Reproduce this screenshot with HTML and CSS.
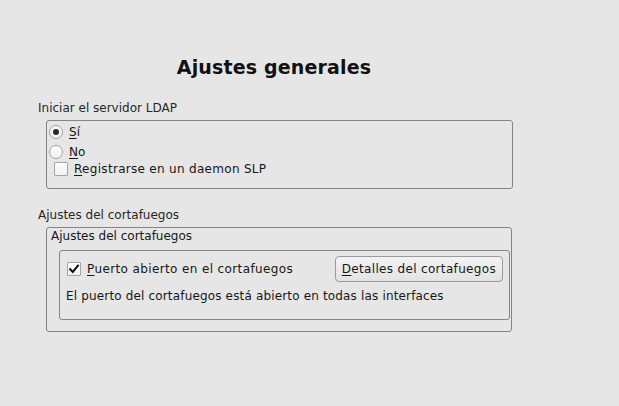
FILE: index.html
```html
<!DOCTYPE html>
<html lang="es">
<head>
<meta charset="utf-8">
<title>Ajustes generales</title>
<link rel="stylesheet" href="styles.css">
</head>
<body>
<div class="page">
  <h1 class="title">Ajustes generales</h1>

  <div class="section-label">Iniciar el servidor LDAP</div>
  <div class="group ldap">
    <div class="row radio-row">
      <span class="radio checked"></span>
      <span class="text"><u>S</u>í</span>
    </div>
    <div class="row radio-row">
      <span class="radio"></span>
      <span class="text"><u>N</u>o</span>
    </div>
    <div class="row check-row slp">
      <span class="check"></span>
      <span class="text wide"><u>R</u>egistrarse en un daemon SLP</span>
    </div>
  </div>

  <div class="section-label second">Ajustes del cortafuegos</div>
  <div class="group fw">
    <div class="legend">Ajustes del cortafuegos</div>
    <div class="inner">
      <div class="fw-row">
        <div class="row check-row">
          <span class="check checked">
            <svg viewBox="0 0 14 14" width="14" height="14"><path d="M2.5 7.2 L5.6 10.4 L11.6 3.2" fill="none" stroke="#111" stroke-width="2.4" stroke-linecap="square"/></svg>
          </span>
          <span class="text wider"><u>P</u>uerto abierto en el cortafuegos</span>
        </div>
        <button class="btn"><u>D</u>etalles del cortafuegos</button>
      </div>
      <div class="status">El puerto del cortafuegos está abierto en todas las interfaces</div>
    </div>
  </div>
</div>
</body>
</html>
```

FILE: styles.css
```css
html, body {
  margin: 0;
  padding: 0;
  background: #e6e6e6;
}

body {
  font-family: "DejaVu Sans", "Liberation Sans", sans-serif;
  font-size: 12px;
  line-height: 14px;
  color: #161616;
  width: 619px;
  height: 406px;
  overflow: hidden;
}

.page {
  padding: 56px 0 0 38px;
  width: 472px;
}

.title {
  margin: 0;
  font-size: 19px;
  line-height: 22px;
  font-weight: bold;
  text-align: center;
  color: #111;
  letter-spacing: 0.15px;
}

.section-label {
  margin-top: 23px;
  height: 14px;
  color: #262626;
}

.section-label.second {
  margin-top: 19px;
}

.group {
  margin-left: 8px;
  width: 463px;
  border: 1px solid #858585;
  border-radius: 3px;
}

.ldap {
  margin-top: 5px;
  padding: 1px 0 12px 2px;
}

.row {
  display: flex;
  align-items: center;
}

.radio-row {
  height: 20px;
  gap: 6px;
}

.check-row {
  height: 14px;
  gap: 6px;
}

.slp {
  padding-left: 5px;
}

.wide {
  letter-spacing: 0.3px;
}

.wider {
  letter-spacing: 0.38px;
}

.radio {
  width: 12px;
  height: 12px;
  border: 1px solid #a2a2a2;
  border-radius: 50%;
  background: linear-gradient(#fdfdfd, #f0f0f0);
  display: flex;
  align-items: center;
  justify-content: center;
  box-sizing: content-box;
}

.radio.checked::after {
  content: "";
  width: 6px;
  height: 6px;
  border-radius: 50%;
  background: #2b2b2b;
}

.check {
  width: 12px;
  height: 12px;
  border: 1px solid #a4a4a4;
  border-radius: 1px;
  background: linear-gradient(#fdfdfd, #f1f1f1);
  display: flex;
  align-items: center;
  justify-content: center;
  flex: none;
}

.check svg {
  display: block;
}

.text u, .btn u {
  text-decoration: underline;
  text-underline-offset: 2px;
}

.fw {
  margin-top: 5px;
  padding: 1px 1px 11px 0;
}

.legend {
  padding-left: 4px;
  height: 14px;
}

.inner {
  margin: 7px 0 0 12px;
  border: 1px solid #858585;
  border-radius: 3px;
  padding: 5px 6px 16px 6px;
}

.fw-row {
  display: flex;
  align-items: center;
  justify-content: space-between;
  height: 26px;
  padding-left: 1px;
}

.btn {
  font-family: inherit;
  font-size: 12px;
  line-height: 14px;
  letter-spacing: 0.33px;
  color: #161616;
  height: 26px;
  padding: 0 6px;
  border: 1px solid #9a9a9a;
  border-radius: 4px;
  background: linear-gradient(#f3f3f3, #e3e3e3);
  margin: 0;
}

.status {
  margin-top: 7px;
  height: 14px;
  letter-spacing: 0.16px;
}
```
